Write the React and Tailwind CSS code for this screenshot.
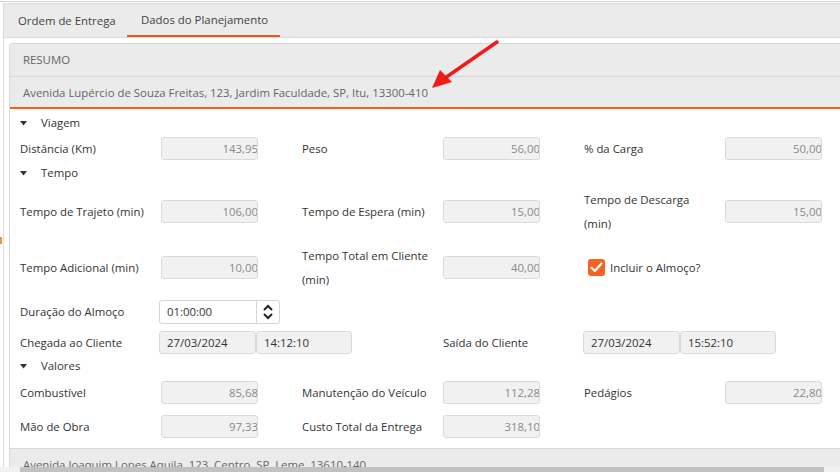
import React from 'react'

const font = { fontFamily: '"Open Sans", "Noto Sans", sans-serif' }

function Caret() {
    return (
        <svg width="7" height="5" viewBox="0 0 7 5" className="shrink-0">
            <path d="M0 0 L7 0 L3.5 4.5 Z" fill="#333" />
        </svg>
    )
}

function SectionHeader({ title, h }) {
    return (
        <div className={`flex items-center pl-[10px] ${h}`}>
            <Caret />
            <span className="ml-[14px] text-[#333]">{title}</span>
        </div>
    )
}

function NumBox({ value }) {
    return (
        <div className="w-[97px] h-[23px] shrink-0 rounded-[3px] border border-[#dadada] bg-[#f1f1f1] flex items-center justify-end overflow-hidden">
            <span className="text-[#8a8a8a] -mr-[1px]">{value}</span>
        </div>
    )
}

function Field({ label, value }) {
    return (
        <div className="flex items-center w-[282px] shrink-0">
            <div className="w-[141px] shrink-0 pr-[13px] leading-[24px] text-[#333]">{label}</div>
            {value !== undefined && <NumBox value={value} />}
        </div>
    )
}

function FieldRow({ h, children }) {
    return <div className={`flex items-center pl-[10px] pt-[1px] ${h}`}>{children}</div>
}

function DateBox({ value, w }) {
    return (
        <div className={`${w} h-[23px] shrink-0 rounded-[3px] border border-[#dadada] bg-[#f1f1f1] flex items-center pl-[7px] text-[#333]`}>
            {value}
        </div>
    )
}

export default function App() {
    return (
        <div className="relative w-[840px] h-[472px] overflow-hidden bg-white text-[11.4px]" style={font}>
            {/* top lines */}
            <div className="h-[1px] bg-white" />
            <div className="h-[1px] bg-[#d2d2d2]" />
            <div className="h-[1px] bg-white" />

            <div className="ml-[3px] border-l border-t border-[#dcdcdc] h-[468px] flex flex-col">
                {/* tabs */}
                <div className="h-[34px] bg-[#ebebeb] border-b border-[#dcdcdc] flex items-end shrink-0">
                    <div className="h-[33px] w-[123px] flex items-center pl-[14px] text-[#444] whitespace-nowrap">Ordem de Entrega</div>
                    <div className="h-[33px] w-[153px] flex items-center pl-[14px] text-[#444] whitespace-nowrap border-b-2 border-[#ee5b0f]">Dados do Planejamento</div>
                </div>

                {/* panel */}
                <div className="mt-[5px] ml-[5px] w-[900px] flex-1 border-l border-t border-[#d8d8d8] rounded-tl-[4px] flex flex-col overflow-hidden">
                    <div className="h-[33px] bg-[#ebebeb] border-b border-[#d8d8d8] flex items-center pl-[13px] text-[#666] shrink-0 rounded-tl-[4px]">RESUMO</div>
                    <div className="h-[32px] bg-[#ebebeb] border-b-2 border-[#f0600f] flex items-center pl-[13px] pt-[1px] text-[#666] shrink-0">
                        Avenida Lupércio de Souza Freitas, 123, Jardim Faculdade, SP, Itu, 13300-410
                    </div>

                    <div className="pt-[2px] shrink-0">
                        <SectionHeader title="Viagem" h="h-[24px]" />
                        <FieldRow h="h-[26px]">
                            <Field label="Distância (Km)" value="143,95" />
                            <Field label="Peso" value="56,00" />
                            <Field label="% da Carga" value="50,00" />
                        </FieldRow>
                        <SectionHeader title="Tempo" h="h-[24px]" />
                        <FieldRow h="h-[52px]">
                            <Field label="Tempo de Trajeto (min)" value="106,00" />
                            <Field label="Tempo de Espera (min)" value="15,00" />
                            <Field label="Tempo de Descarga (min)" value="15,00" />
                        </FieldRow>
                        <FieldRow h="h-[60px]">
                            <Field label="Tempo Adicional (min)" value="10,00" />
                            <Field label="Tempo Total em Cliente (min)" value="40,00" />
                            <div className="flex items-center ml-[4px]">
                                <div className="w-[17px] h-[17px] rounded-[3px] bg-[#f26522] flex items-center justify-center">
                                    <svg width="13" height="11" viewBox="0 0 13 11">
                                        <path d="M1.5 5.8 L4.8 9 L11.5 1.5" stroke="white" strokeWidth="2.2" fill="none" strokeLinecap="round" strokeLinejoin="round" />
                                    </svg>
                                </div>
                                <span className="ml-[5px] text-[#333]">Incluir o Almoço?</span>
                            </div>
                        </FieldRow>

                        <FieldRow h="h-[28px]">
                            <div className="w-[139px] shrink-0 text-[#333]">Duração do Almoço</div>
                            <div className="flex h-[24px] border border-[#d6d6d6] rounded-[3px] bg-white">
                                <div className="w-[96px] flex items-center pl-[7px] text-[#333]">01:00:00</div>
                                <div className="w-[23px] border-l border-[#d6d6d6] flex items-center justify-center">
                                    <svg width="12" height="18" viewBox="0 0 12 18">
                                        <path d="M2 7 L6 3 L10 7" stroke="#222" strokeWidth="2" fill="none" />
                                        <path d="M2 11 L6 15 L10 11" stroke="#222" strokeWidth="2" fill="none" />
                                    </svg>
                                </div>
                            </div>
                        </FieldRow>

                        <FieldRow h="h-[34px]">
                            <div className="w-[139px] shrink-0 text-[#333]">Chegada ao Cliente</div>
                            <DateBox value="27/03/2024" w="w-[97px]" />
                            <DateBox value="14:12:10" w="w-[96px]" />
                            <div className="w-[140px] shrink-0 ml-[91px] text-[#333]">Saída do Cliente</div>
                            <DateBox value="27/03/2024" w="w-[97px]" />
                            <DateBox value="15:52:10" w="w-[96px]" />
                        </FieldRow>

                        <SectionHeader title="Valores" h="h-[14px]" />
                        <FieldRow h="h-[38px]">
                            <Field label="Combustível" value="85,68" />
                            <Field label="Manutenção do Veículo" value="112,28" />
                            <Field label="Pedágios" value="22,80" />
                        </FieldRow>
                        <FieldRow h="h-[30px]">
                            <Field label="Mão de Obra" value="97,33" />
                            <Field label="Custo Total da Entrega" value="318,10" />
                        </FieldRow>
                        <div className="h-[7px]" />
                    </div>

                    <div className="flex-1 bg-[#ebebeb] border-t border-[#d8d8d8] pl-[13px] pt-[7px] text-[#666]">
                        Avenida Joaquim Lopes Aquila, 123, Centro, SP, Leme, 13610-140
                    </div>
                </div>
            </div>

            {/* horizontal scrollbar */}
            <div className="absolute left-0 bottom-0 w-[840px] h-[5px] flex">
                <div className="w-[20px] bg-[#f1f1f1]" />
                <div className="w-[804px] bg-[#c1c1c1]" />
                <div className="flex-1 bg-[#f1f1f1]" />
            </div>

            {/* splitter handle */}
            <div className="absolute left-0 top-[237px] w-[2px] h-[7px] bg-[#e49a45]" />

            {/* red annotation arrow */}
            <svg className="absolute left-[425px] top-[38px]" width="80" height="56" viewBox="0 0 80 56">
                <path d="M72 4 L20 40" stroke="#f21b1b" strokeWidth="3.5" strokeLinecap="round" />
                <path d="M7 50 L15 32 L27 44 Z" fill="#f21b1b" />
            </svg>
        </div>
    )
}
